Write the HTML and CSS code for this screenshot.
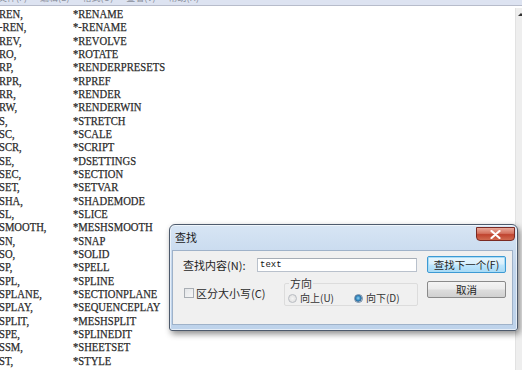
FILE: index.html
```html
<!DOCTYPE html>
<html>
<head>
<meta charset="utf-8">
<link rel="stylesheet" href="styles.css">
</head>
<body>
<div class="app">
  <div class="menubar">
    <div class="menu-items">
      <span>文件(F)</span><span>编辑(E)</span><span>格式(O)</span><span>查看(V)</span><span>帮助(H)</span>
    </div>
  </div>
  <div class="editor">
    <div class="text-clip">
      <div class="text">
        <span>REN,</span><span>*RENAME</span>
        <span>-REN,</span><span>*-RENAME</span>
        <span>REV,</span><span>*REVOLVE</span>
        <span>RO,</span><span>*ROTATE</span>
        <span>RP,</span><span>*RENDERPRESETS</span>
        <span>RPR,</span><span>*RPREF</span>
        <span>RR,</span><span>*RENDER</span>
        <span>RW,</span><span>*RENDERWIN</span>
        <span>S,</span><span>*STRETCH</span>
        <span>SC,</span><span>*SCALE</span>
        <span>SCR,</span><span>*SCRIPT</span>
        <span>SE,</span><span>*DSETTINGS</span>
        <span>SEC,</span><span>*SECTION</span>
        <span>SET,</span><span>*SETVAR</span>
        <span>SHA,</span><span>*SHADEMODE</span>
        <span>SL,</span><span>*SLICE</span>
        <span>SMOOTH,</span><span>*MESHSMOOTH</span>
        <span>SN,</span><span>*SNAP</span>
        <span>SO,</span><span>*SOLID</span>
        <span>SP,</span><span>*SPELL</span>
        <span>SPL,</span><span>*SPLINE</span>
        <span>SPLANE,</span><span>*SECTIONPLANE</span>
        <span>SPLAY,</span><span>*SEQUENCEPLAY</span>
        <span>SPLIT,</span><span>*MESHSPLIT</span>
        <span>SPE,</span><span>*SPLINEDIT</span>
        <span>SSM,</span><span>*SHEETSET</span>
        <span>ST,</span><span>*STYLE</span>
        <span>STA,</span><span>*STANDARDS</span>
      </div>
    </div>
    <div class="scrollbar"><div class="arrow-up"></div></div>
  </div>
</div>

<div class="dialog">
  <div class="titlebar">
    <span class="title">查找</span>
    <div class="close"><svg width="11" height="9" viewBox="0 0 11 9"><path d="M1.5 1 L9.5 8 M9.5 1 L1.5 8" stroke="#fff" stroke-width="2.2" stroke-linecap="round"/></svg></div>
  </div>
  <div class="client">
    <div class="left-col">
      <div class="find-row">
        <span class="label">查找内容(N):</span>
        <div class="input">text</div>
      </div>
      <div class="options-row">
        <label class="check"><span class="box"></span>区分大小写(C)</label>
        <fieldset class="group">
          <legend>方向</legend>
          <div class="radios">
            <span class="radio"><span class="dot"></span>向上(U)</span>
            <span class="radio on"><span class="dot"></span>向下(D)</span>
          </div>
        </fieldset>
      </div>
    </div>
    <div class="buttons">
      <div class="btn default">查找下一个(F)</div>
      <div class="btn">取消</div>
    </div>
  </div>
</div>
</body>
</html>
```

FILE: styles.css
```css
html, body {
  margin: 0;
  padding: 0;
  width: 522px;
  height: 370px;
  overflow: hidden;
  background: #fff;
}

.app {
  display: flex;
  flex-direction: column;
  height: 370px;
}

.menubar {
  height: 5px;
  overflow: hidden;
  background: #dde3f1;
  border-bottom: 1px solid #b7bccb;
}

.menu-items {
  display: flex;
  gap: 13px;
  margin-top: -8px;
  margin-left: -2px;
  font-family: "Noto Sans CJK SC", sans-serif;
  font-size: 9px;
  line-height: 12px;
  color: #8a8f9c;
}

.editor {
  flex: 1;
  display: flex;
  min-height: 0;
}

.text-clip {
  flex: 1;
  overflow: hidden;
}

.text {
  display: grid;
  grid-template-columns: 87px auto;
  align-content: start;
  padding-top: 2px;
  margin-left: -1px;
  font-family: "Liberation Serif", serif;
  font-size: 12.5px;
  line-height: 13.33px;
  color: #2a2a2a;
  transform: scaleX(0.85);
  transform-origin: 0 0;
  -webkit-text-stroke: 0.25px #2a2a2a;
}

.scrollbar {
  width: 6px;
  margin-top: 2px;
  background: #eeeeee;
  border-left: 1px solid #e2e2e2;
}

.arrow-up {
  margin: 5px 0 0 2px;
  width: 0;
  height: 0;
  border-left: 3px solid transparent;
  border-right: 3px solid transparent;
  border-bottom: 3px solid #333;
}

/* dialog */
.dialog {
  position: absolute;
  left: 169px;
  top: 224px;
  width: 347px;
  height: 105px;
  border: 1px solid #4d5a6c;
  border-radius: 6px 6px 3px 3px;
  background: linear-gradient(180deg, #d7e5f4 0%, #c3d6ec 40%, #bed3eb 100%);
  box-shadow: 2px 3px 6px rgba(0, 0, 0, 0.45), inset 0 0 0 1px rgba(255,255,255,0.6);
  display: flex;
  flex-direction: column;
  font-family: "Noto Sans CJK SC", sans-serif;
  color: #1e1e1e;
}

.titlebar {
  height: 25px;
  display: flex;
  align-items: flex-start;
  justify-content: space-between;
  padding: 0 2px 0 5px;
}

.title {
  font-size: 11px;
  line-height: 11px;
  margin-top: 7px;
  color: #1a1a1a;
}

.close {
  width: 39px;
  height: 14px;
  margin-top: 2px;
  border: 1px solid #7a2a23;
  border-radius: 0 0 4px 4px;
  background: linear-gradient(180deg, #e9a99a 0%, #d4715e 45%, #c0442f 55%, #d06a50 100%);
  display: flex;
  align-items: center;
  justify-content: center;
  box-sizing: border-box;
}

.client {
  flex: 1;
  margin: 0 4px 5px 2px;
  background: #f0f0f0;
  border: 1px solid #9fb2c9;
  display: flex;
  justify-content: space-between;
  padding: 5px 6px 0 10px;
}

.left-col {
  display: flex;
  flex-direction: column;
}

.find-row {
  display: flex;
  align-items: center;
  margin-top: 2px;
}

.label {
  font-size: 11px;
  line-height: 14px;
  width: 74px;
}

.input {
  width: 156px;
  height: 12px;
  border: 1px solid #b9c1cc;
  border-top-color: #a6adb6;
  background: #fff;
  font-family: "Liberation Mono", monospace;
  font-size: 9px;
  line-height: 12px;
  padding-left: 2px;
  color: #111;
}

.options-row {
  display: flex;
  align-items: flex-end;
  margin-top: 6px;
}

.check {
  display: flex;
  align-items: center;
  gap: 2px;
  font-size: 11px;
  line-height: 12px;
  width: 100px;
  margin-bottom: 7px;
  margin-left: 1px;
  color: #2a2a2a;
}

.box {
  width: 8px;
  height: 8px;
  border: 1px solid #a9aeb4;
  background: linear-gradient(135deg, #e3e5e8, #f7f7f7);
}

.group {
  margin: 0;
  width: 134px;
  height: 28px;
  box-sizing: border-box;
  border: 1px solid #dcdcdc;
  border-radius: 2px;
  padding: 0 0 0 3px;
}

.group legend {
  font-size: 11px;
  line-height: 11px;
  padding: 0 1px;
  margin-left: 1px;
  color: #333;
}

.radios {
  display: flex;
  gap: 20px;
  margin-top: 3px;
}

.radio {
  display: flex;
  align-items: center;
  gap: 3px;
  font-size: 10px;
  line-height: 12px;
  color: #333;
}

.dot {
  width: 7px;
  height: 7px;
  border-radius: 50%;
  border: 1px solid #b8bcc2;
  background: radial-gradient(circle, #f4f4f4 0%, #dcdcdc 100%);
}

.radio.on .dot {
  border-color: #6f8aa6;
  background: radial-gradient(circle at 45% 45%, #8fd3f5 0%, #2a7fb8 45%, #3a6a92 60%, #dfe6ee 70%);
}

.buttons {
  display: flex;
  flex-direction: column;
  gap: 8px;
}

.btn {
  width: 79px;
  height: 17px;
  box-sizing: border-box;
  border: 1px solid #8a8a8a;
  border-radius: 2px;
  background: linear-gradient(180deg, #f4f4f4 0%, #ebebeb 45%, #dcdcdc 55%, #d0d0d0 100%);
  font-size: 10.5px;
  line-height: 15px;
  text-align: center;
  color: #1e1e1e;
}

.btn.default {
  border-color: #3d9ad4;
  box-shadow: inset 0 0 0 1px #a9dcf5;
  background: linear-gradient(180deg, #eaf6fd 0%, #d9f0fc 45%, #bee6fd 55%, #a7d9f5 100%);
}
```
